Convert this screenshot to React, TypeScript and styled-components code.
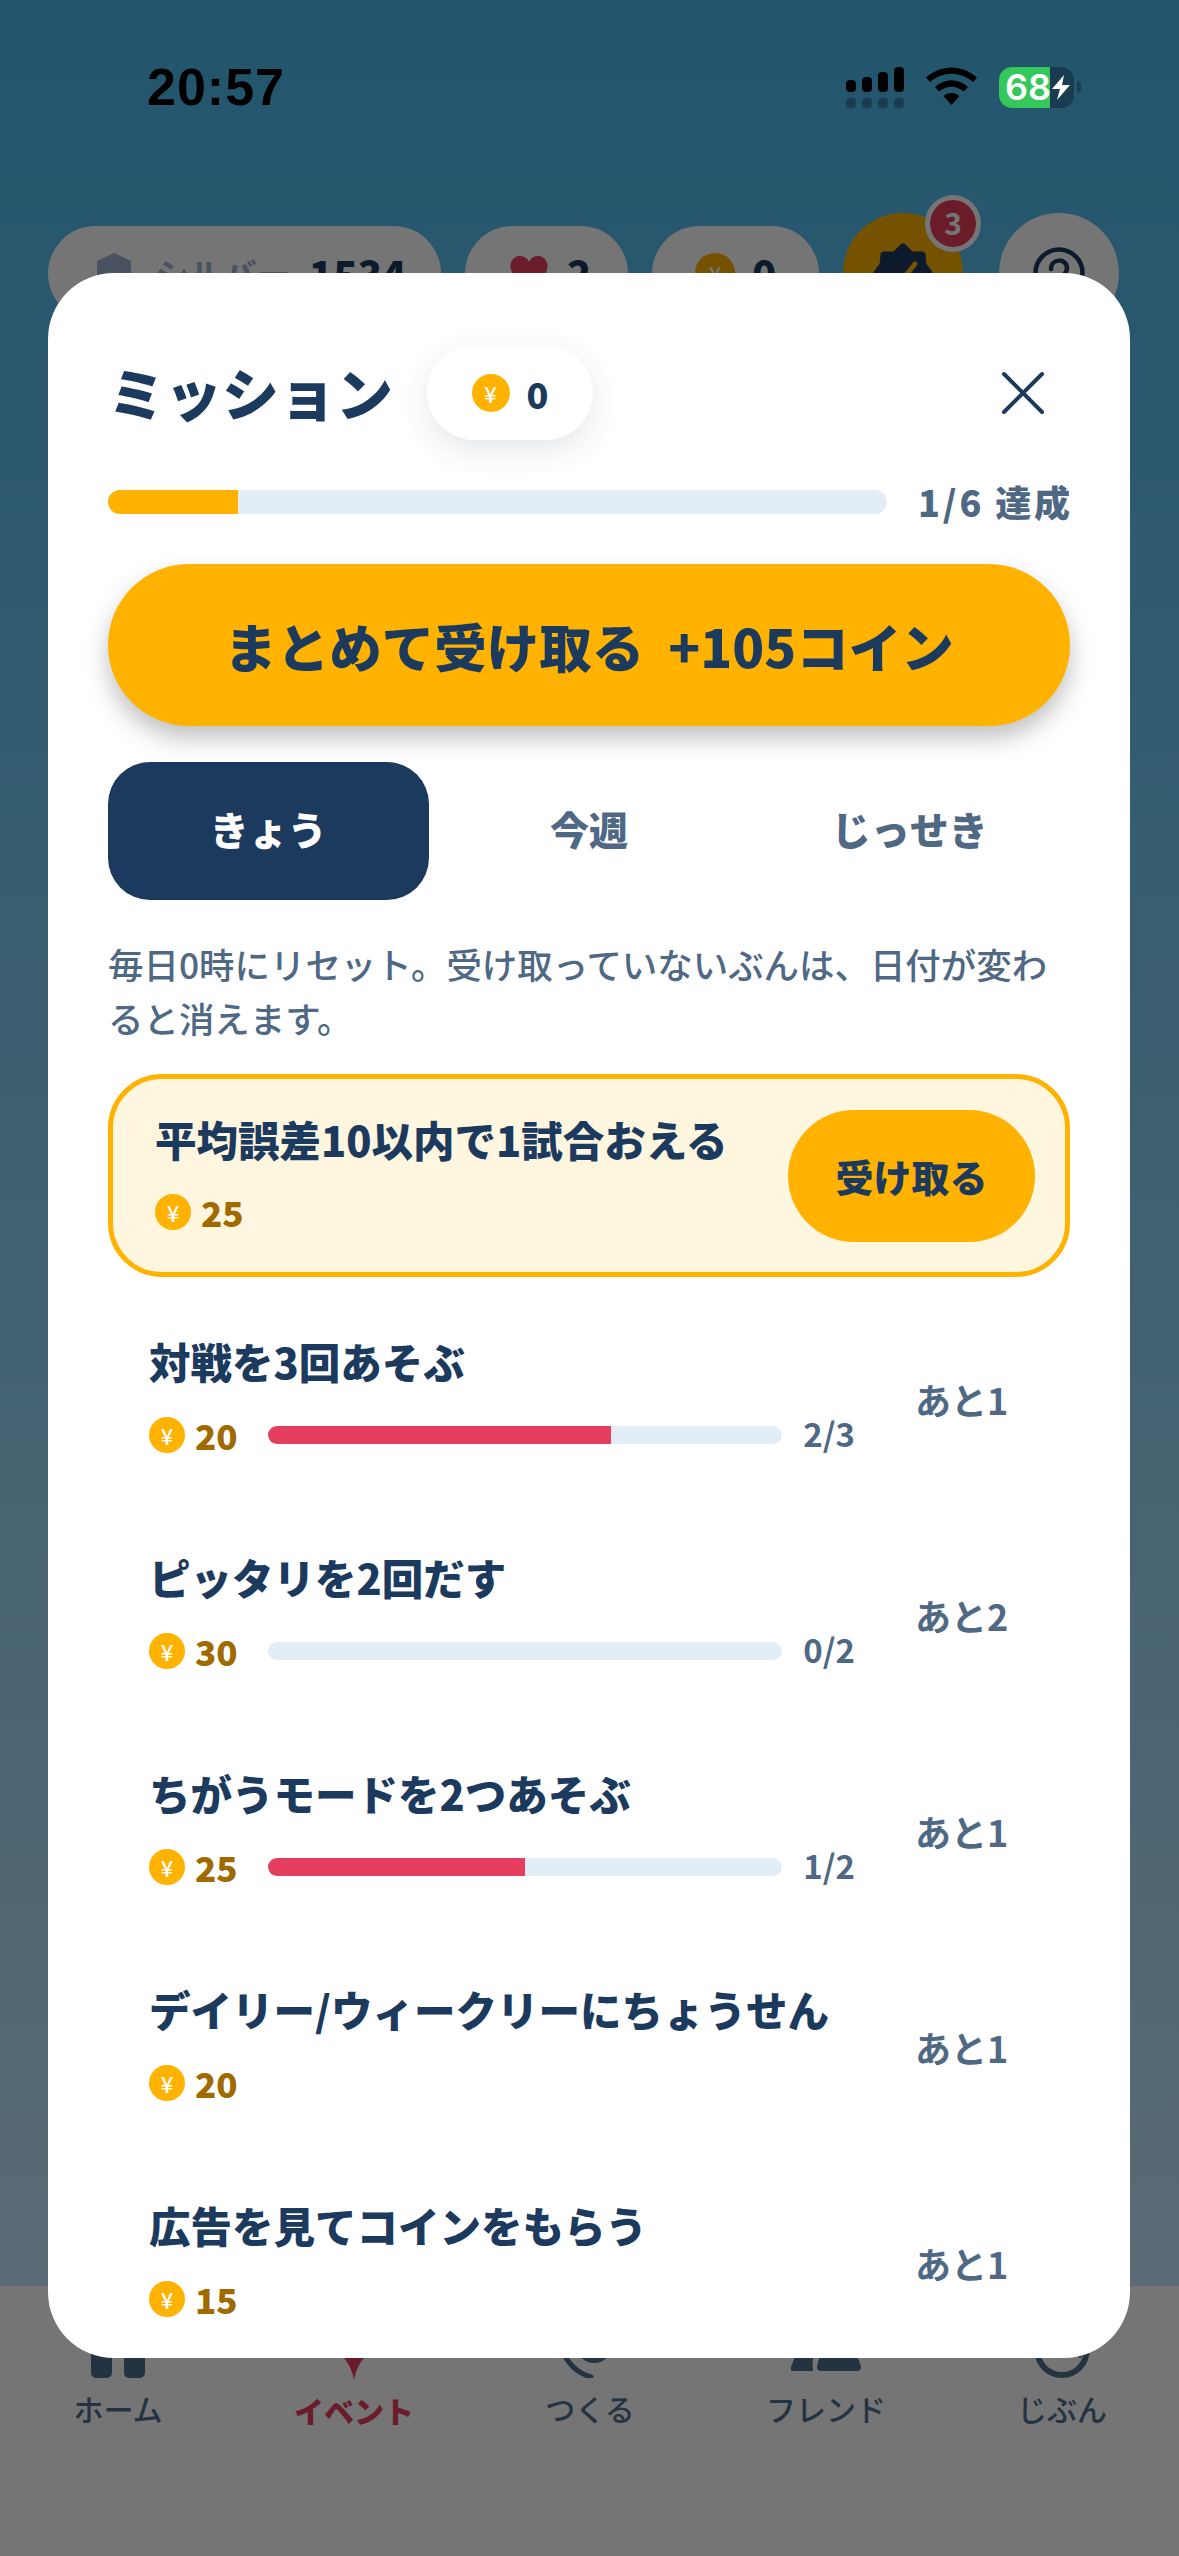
import styled, { createGlobalStyle } from "styled-components";

const Global = createGlobalStyle`
  html, body {
    margin: 0;
    padding: 0;
    background: #757575;
  }
  * {
    box-sizing: border-box;
  }
`;

const FONT = `"Noto Sans CJK JP", "Noto Sans", sans-serif`;
const NAVY = "#1c3a5e";
const SLATE = "#4f6884";
const NAV_INK = "#50708f";
const GOLD = "#ffb200";
const RED = "#e63e5e";

const Screen = styled.div`
  position: relative;
  width: 1179px;
  height: 2556px;
  overflow: hidden;
  display: flex;
  flex-direction: column;
  font-family: ${FONT};
  background: linear-gradient(180deg, #4ab9ed 0%, #c4e9fe 89.4%);
`;
const Scrim = styled.div`
  position: absolute;
  inset: 0;
  background: rgba(0, 0, 0, 0.54);
`;

/* status bar */
const StatusBar = styled.div`
  position: relative;
  z-index: 3;
  height: 213px;
  padding: 67px 98px 0 147px;
  display: flex;
  align-items: flex-start;
  justify-content: space-between;
`;
const Clock = styled.div`
  font-family: "Liberation Sans", sans-serif;
  font-weight: 700;
  font-size: 52px;
  letter-spacing: 1px;
  line-height: 40px;
  color: #000;
`;
const StatusIcons = styled.div`
  display: flex;
  align-items: flex-start;
  gap: 22px;
`;
const Battery = styled.div`
  position: relative;
  width: 75px;
  height: 41px;
  border-radius: 13px;
  background: #193c52;
  display: flex;
  align-items: center;
  color: #fff;
  font-family: Inter, sans-serif;
  font-weight: 600;
  font-size: 36px;
  &::before {
    content: "";
    width: 51px;
    height: 100%;
    border-radius: 13px 0 0 13px;
    background: #34c759;
    flex: none;
  }
`;
const BatteryLabel = styled.span`
  position: absolute;
  left: 6px;
  top: 0;
  line-height: 41px;
`;
const BatteryBolt = styled.svg`
  position: absolute;
  left: 53px;
  top: 8px;
`;
const BatteryNub = styled.div`
  width: 4px;
  height: 12px;
  margin: 14px 0 0 -19px;
  border-radius: 0 4px 4px 0;
  background: #193c52;
`;

/* game header behind the modal */
const Hud = styled.div`
  height: 120px;
  padding: 0 60px 0 48px;
  display: flex;
  align-items: center;
  gap: 24px;
`;
const HudPill = styled.div<{ $width: number; $gap: number; $pad: number }>`
  width: ${(p) => p.$width}px;
  height: 95px;
  border-radius: 48px;
  background: #fff;
  display: flex;
  align-items: center;
  gap: ${(p) => p.$gap}px;
  padding-left: ${(p) => p.$pad}px;
  flex: none;
`;
const HudLabel = styled.span`
  font-size: 34px;
  font-weight: 700;
  color: #a1b4d0;
  margin-right: -6px;
`;
const HudCount = styled.span`
  font-size: 40px;
  font-weight: 900;
  color: ${NAVY};
`;
const HudRound = styled.div<{ $gold?: boolean }>`
  position: relative;
  width: 120px;
  height: 120px;
  border-radius: 50%;
  flex: none;
  background: ${(p) => (p.$gold ? GOLD : "#fff")};
  display: flex;
  align-items: center;
  justify-content: center;
  & + & {
    margin-left: 12px;
  }
`;
const Badge = styled.div`
  position: absolute;
  top: -18px;
  right: -18px;
  width: 56px;
  height: 57px;
  border-radius: 50%;
  border: 5px solid #fff;
  background: ${RED};
  color: #fff;
  font-size: 30px;
  font-weight: 700;
  line-height: 44px;
  text-align: center;
`;

/* bottom navigation */
const BottomNav = styled.nav`
  margin-top: auto;
  height: 270px;
  background: #fff;
  display: grid;
  grid-template-columns: repeat(5, 236px);
  padding-top: 62px;
`;
const NavItem = styled.div<{ $active?: boolean }>`
  display: flex;
  flex-direction: column;
  align-items: center;
  gap: 8px;
  font-size: 30px;
  font-weight: ${(p) => (p.$active ? 900 : 500)};
  color: ${(p) => (p.$active ? RED : NAV_INK)};
  line-height: 44px;
`;

/* modal */
const Modal = styled.section`
  position: absolute;
  left: 48px;
  top: 273px;
  width: 1082px;
  height: 2085px;
  overflow: hidden;
  background: #fff;
  border-radius: 66px;
  padding: 72px 60px 0;
`;
const Header = styled.header`
  height: 95px;
  display: flex;
  align-items: center;
`;
const Title = styled.h1`
  margin: -2px 34px 0 0;
  font-size: 57px;
  font-weight: 900;
  color: ${NAVY};
  line-height: 95px;
`;
const CoinPill = styled.div`
  width: 166px;
  height: 95px;
  border-radius: 48px;
  background: #fff;
  box-shadow: 0 10px 30px rgba(28, 58, 94, 0.12);
  display: flex;
  align-items: center;
  justify-content: center;
  gap: 17px;
  font-size: 36px;
  font-weight: 900;
  color: ${NAVY};
`;
const CloseButton = styled.button`
  margin-left: auto;
  margin-right: 25px;
  width: 44px;
  height: 44px;
  padding: 0;
  border: 0;
  background: none;
  display: flex;
`;
const Coin = styled.span<{ $size?: number }>`
  flex: none;
  width: ${(p) => p.$size ?? 36}px;
  height: ${(p) => p.$size ?? 36}px;
  border-radius: 50%;
  background: ${GOLD};
  color: #fff;
  font-size: 22px;
  font-weight: 500;
  display: flex;
  align-items: center;
  justify-content: center;
  line-height: 1;
`;
const OverallRow = styled.div`
  margin-top: 42px;
  display: flex;
  align-items: center;
  gap: 31px;
  height: 40px;
`;
const Track = styled.div<{ $height: number }>`
  flex: 1;
  height: ${(p) => p.$height}px;
  border-radius: ${(p) => p.$height / 2}px;
  background: #e3edf6;
  overflow: hidden;
`;
const Fill = styled.div<{ $color: string }>`
  height: 100%;
  background: ${(p) => p.$color};
`;
const OverallText = styled.span`
  font-size: 36px;
  font-weight: 800;
  letter-spacing: 2.8px;
  margin-right: -2.8px;
  margin-top: -2px;
  color: ${SLATE};
  white-space: pre;
`;
const ClaimAll = styled.button`
  margin-top: 42px;
  width: 100%;
  height: 162px;
  border: 0;
  border-radius: 81px;
  background: ${GOLD};
  box-shadow: 0 12px 24px rgba(0, 0, 0, 0.25);
  font-family: ${FONT};
  font-size: 52.5px;
  font-weight: 900;
  color: ${NAVY};
  white-space: pre;
`;
const Tabs = styled.div`
  margin-top: 36px;
  display: grid;
  grid-template-columns: repeat(3, 1fr);
`;
const Tab = styled.div<{ $active?: boolean }>`
  height: 138px;
  border-radius: 42px;
  padding-bottom: 6px;
  display: flex;
  align-items: center;
  justify-content: center;
  font-size: 39px;
  font-weight: 800;
  color: ${(p) => (p.$active ? "#fff" : SLATE)};
  background: ${(p) => (p.$active ? NAVY : "transparent")};
`;
const Note = styled.p`
  margin: 37px 0 0;
  font-size: 35.45px;
  line-height: 54px;
  font-weight: 500;
  color: ${SLATE};
`;
const ClaimCard = styled.div`
  margin: 29px 0 11px;
  height: 203px;
  border: 5px solid ${GOLD};
  border-radius: 54px;
  background: #fff6e0;
  display: flex;
  align-items: center;
  justify-content: space-between;
  padding: 0 30px 0 42px;
`;
const MissionTitle = styled.div`
  font-size: 41.5px;
  font-weight: 800;
  line-height: 56px;
  color: ${NAVY};
`;
const Reward = styled.div`
  display: flex;
  align-items: center;
  gap: 10px;
  font-size: 35px;
  font-weight: 800;
  color: #a06a00;
  flex: none;
`;
const ClaimStack = styled.div`
  display: flex;
  flex-direction: column;
  gap: 19px;
  padding-bottom: 3px;
`;
const ClaimButton = styled.div`
  width: 247px;
  height: 132px;
  border-radius: 66px;
  background: ${GOLD};
  color: ${NAVY};
  font-size: 38px;
  font-weight: 900;
  display: flex;
  align-items: center;
  justify-content: center;
`;
const MissionRow = styled.div`
  height: 216px;
  display: flex;
  align-items: center;
  padding-left: 41px;
`;
const RowMain = styled.div`
  width: 706px;
  display: flex;
  flex-direction: column;
  gap: 24px;
  padding-bottom: 3px;
  flex: none;
`;
const RewardLine = styled.div`
  display: flex;
  align-items: center;
  height: 44px;
  gap: 30px;
`;
const Count = styled.span`
  font-size: 33px;
  font-weight: 700;
  color: ${SLATE};
  margin: -3px 0 0 -9px;
  flex: none;
`;
const Remain = styled.div`
  margin: 5px 0 0 60px;
  font-size: 36px;
  font-weight: 700;
  color: ${SLATE};
`;

const Yen = ({ size }: { size?: number }) => <Coin $size={size}>¥</Coin>;

const missions = [
  { title: "対戦を3回あそぶ", coin: 20, done: 2, total: 3, left: 1 },
  { title: "ピッタリを2回だす", coin: 30, done: 0, total: 2, left: 2 },
  { title: "ちがうモードを2つあそぶ", coin: 25, done: 1, total: 2, left: 1 },
  { title: "デイリー/ウィークリーにちょうせん", coin: 20, left: 1 },
  { title: "広告を見てコインをもらう", coin: 15, left: 1 },
];

const App = () => {
  return (
    <Screen>
      <Global />
      <StatusBar>
        <Clock>20:57</Clock>
        <StatusIcons>
          <svg width="58" height="42" viewBox="0 0 58 42">
            <g fill="#000">
              <rect x="0" y="13" width="10" height="12" rx="4" />
              <rect x="16" y="10" width="10" height="15" rx="4" />
              <rect x="32" y="5" width="10" height="20" rx="4" />
              <rect x="48" y="0" width="10" height="25" rx="4" />
            </g>
            <g fill="#193c52">
              <rect x="0" y="31" width="10" height="10" rx="4" />
              <rect x="16" y="31" width="10" height="10" rx="4" />
              <rect x="32" y="31" width="10" height="10" rx="4" />
              <rect x="48" y="31" width="10" height="10" rx="4" />
            </g>
          </svg>
          <svg width="51" height="40" viewBox="0 0 51 40">
            <path d="M0 10.5 C15 -3 36 -3 51 10.5 L47 15 C34 4 17 4 4 15 Z" fill="#000" />
            <path d="M9 20 C19 11 32 11 42 20 L38 24.5 C30 18 21 18 13 24.5 Z" fill="#000" />
            <path d="M17.5 29 C22 25 29 25 33.5 29 L25.5 38 Z" fill="#000" />
          </svg>
          <Battery>
            <BatteryLabel>68</BatteryLabel>
            <BatteryBolt width="18" height="25" viewBox="0 0 18 25">
              <path d="M12 0 L0 14 H8 L5 25 L18 10 H10 Z" fill="#fff" />
            </BatteryBolt>
          </Battery>
          <BatteryNub />
        </StatusIcons>
      </StatusBar>

      <Hud>
        <HudPill $width={393} $gap={24} $pad={49}>
          <svg width="34" height="40" viewBox="0 0 34 40">
            <path d="M17 0 L34 8 V26 C34 32 26 37 17 40 C8 37 0 32 0 26 V8 Z" fill="#a1b4d0" />
          </svg>
          <HudLabel>シルバー</HudLabel>
          <HudCount>1534</HudCount>
        </HudPill>
        <HudPill $width={163} $gap={19} $pad={45}>
          <svg width="38" height="34" viewBox="0 0 24 22">
            <path d="M12 21 C4 15 0 11 0 6.5 C0 3 2.6 0 6 0 C8.5 0 10.6 1.2 12 3.5 C13.4 1.2 15.5 0 18 0 C21.4 0 24 3 24 6.5 C24 11 20 15 12 21 Z" fill={RED} />
          </svg>
          <HudCount>2</HudCount>
        </HudPill>
        <HudPill $width={167} $gap={17} $pad={43}>
          <Yen size={40} />
          <HudCount>0</HudCount>
        </HudPill>
        <HudRound $gold>
          <svg width="60" height="60" viewBox="0 0 60 60">
            <path
              d="M30 4 L38 12 L49 12 L50 22 L56 30 L50 38 L49 49 L38 49 L30 56 L22 49 L11 49 L10 38 L4 30 L10 22 L11 12 L22 12 Z"
              fill={NAVY}
              stroke={NAVY}
              strokeWidth="7"
              strokeLinejoin="round"
            />
            <path d="M17 33 L25 42 L42 21" fill="none" stroke={GOLD} strokeWidth="5" strokeLinecap="round" />
          </svg>
          <Badge>3</Badge>
        </HudRound>
        <HudRound>
          <svg width="52" height="52" viewBox="0 0 52 52">
            <circle cx="26" cy="26" r="23.5" fill="none" stroke={NAVY} strokeWidth="4.5" />
            <path d="M18 22 C18 11 34 11 34 21 C34 29 26 29 26 37" fill="none" stroke={NAVY} strokeWidth="4.5" strokeLinecap="round" />
          </svg>
        </HudRound>
      </Hud>

      <BottomNav>
        <NavItem>
          <svg width="56" height="30" viewBox="0 0 56 30">
            <path d="M1 0 H22 V24 Q22 30 16 30 H7 Q1 30 1 24 Z M34 0 H55 V24 Q55 30 49 30 H40 Q34 30 34 24 Z" fill={NAV_INK} />
          </svg>
          ホーム
        </NavItem>
        <NavItem $active>
          <svg width="56" height="32" viewBox="0 0 56 32">
            <path d="M6 0 H50 C38 8 31 16 28 32 C25 16 18 8 6 0 Z" fill={RED} />
          </svg>
          イベント
        </NavItem>
        <NavItem>
          <svg width="70" height="30" viewBox="0 0 70 30">
            <path
              d="M6 0 C12 15 22 25 36 29 M24 2 C28 13 42 16 50 8 L54 0"
              fill="none"
              stroke={NAV_INK}
              strokeWidth="5"
              strokeLinecap="round"
            />
          </svg>
          つくる
        </NavItem>
        <NavItem>
          <svg width="72" height="30" viewBox="0 0 72 30">
            <path
              d="M8 0 H26 C23 6 22 14 23 23 H3 Q0 23 1 19 Z M36 0 H58 C65 4 70 12 71 19 Q71 23 67 23 H31 Q27 23 27 19 C28 12 31 5 36 0 Z"
              fill={NAV_INK}
            />
          </svg>
          フレンド
        </NavItem>
        <NavItem>
          <svg width="60" height="30" viewBox="0 0 60 30">
            <path
              d="M5 0 C5 16 16 27 30 27 C44 27 55 16 55 0 M10 8 C22 -2 38 -2 50 8"
              fill="none"
              stroke={NAV_INK}
              strokeWidth="6"
            />
          </svg>
          じぶん
        </NavItem>
      </BottomNav>

      <Scrim />

      <Modal>
        <Header>
          <Title>ミッション</Title>
          <CoinPill>
            <Yen size={38} />0
          </CoinPill>
          <CloseButton aria-label="close">
            <svg width="44" height="44" viewBox="0 0 44 44">
              <path d="M3 3 L41 41 M41 3 L3 41" stroke={NAVY} strokeWidth="4" strokeLinecap="round" />
            </svg>
          </CloseButton>
        </Header>
        <OverallRow>
          <Track $height={24}>
            <Fill $color={GOLD} style={{ width: `${(1 / 6) * 100}%` }} />
          </Track>
          <OverallText>1/6 達成</OverallText>
        </OverallRow>
        <ClaimAll>まとめて受け取る  +105コイン</ClaimAll>
        <Tabs>
          <Tab $active>きょう</Tab>
          <Tab>今週</Tab>
          <Tab>じっせき</Tab>
        </Tabs>
        <Note>毎日0時にリセット。受け取っていないぶんは、日付が変わると消えます。</Note>
        <ClaimCard>
          <ClaimStack>
            <MissionTitle>平均誤差10以内で1試合おえる</MissionTitle>
            <Reward>
              <Yen />
              25
            </Reward>
          </ClaimStack>
          <ClaimButton>受け取る</ClaimButton>
        </ClaimCard>
        {missions.map((m) => (
          <MissionRow key={m.title}>
            <RowMain>
              <MissionTitle>{m.title}</MissionTitle>
              <RewardLine>
                <Reward>
                  <Yen />
                  {m.coin}
                </Reward>
                {m.total !== undefined && (
                  <>
                    <Track $height={18}>
                      <Fill $color={RED} style={{ width: `${((m.done ?? 0) / m.total) * 100}%` }} />
                    </Track>
                    <Count>
                      {m.done}/{m.total}
                    </Count>
                  </>
                )}
              </RewardLine>
            </RowMain>
            <Remain>あと{m.left}</Remain>
          </MissionRow>
        ))}
      </Modal>
    </Screen>
  );
};

export default App;
